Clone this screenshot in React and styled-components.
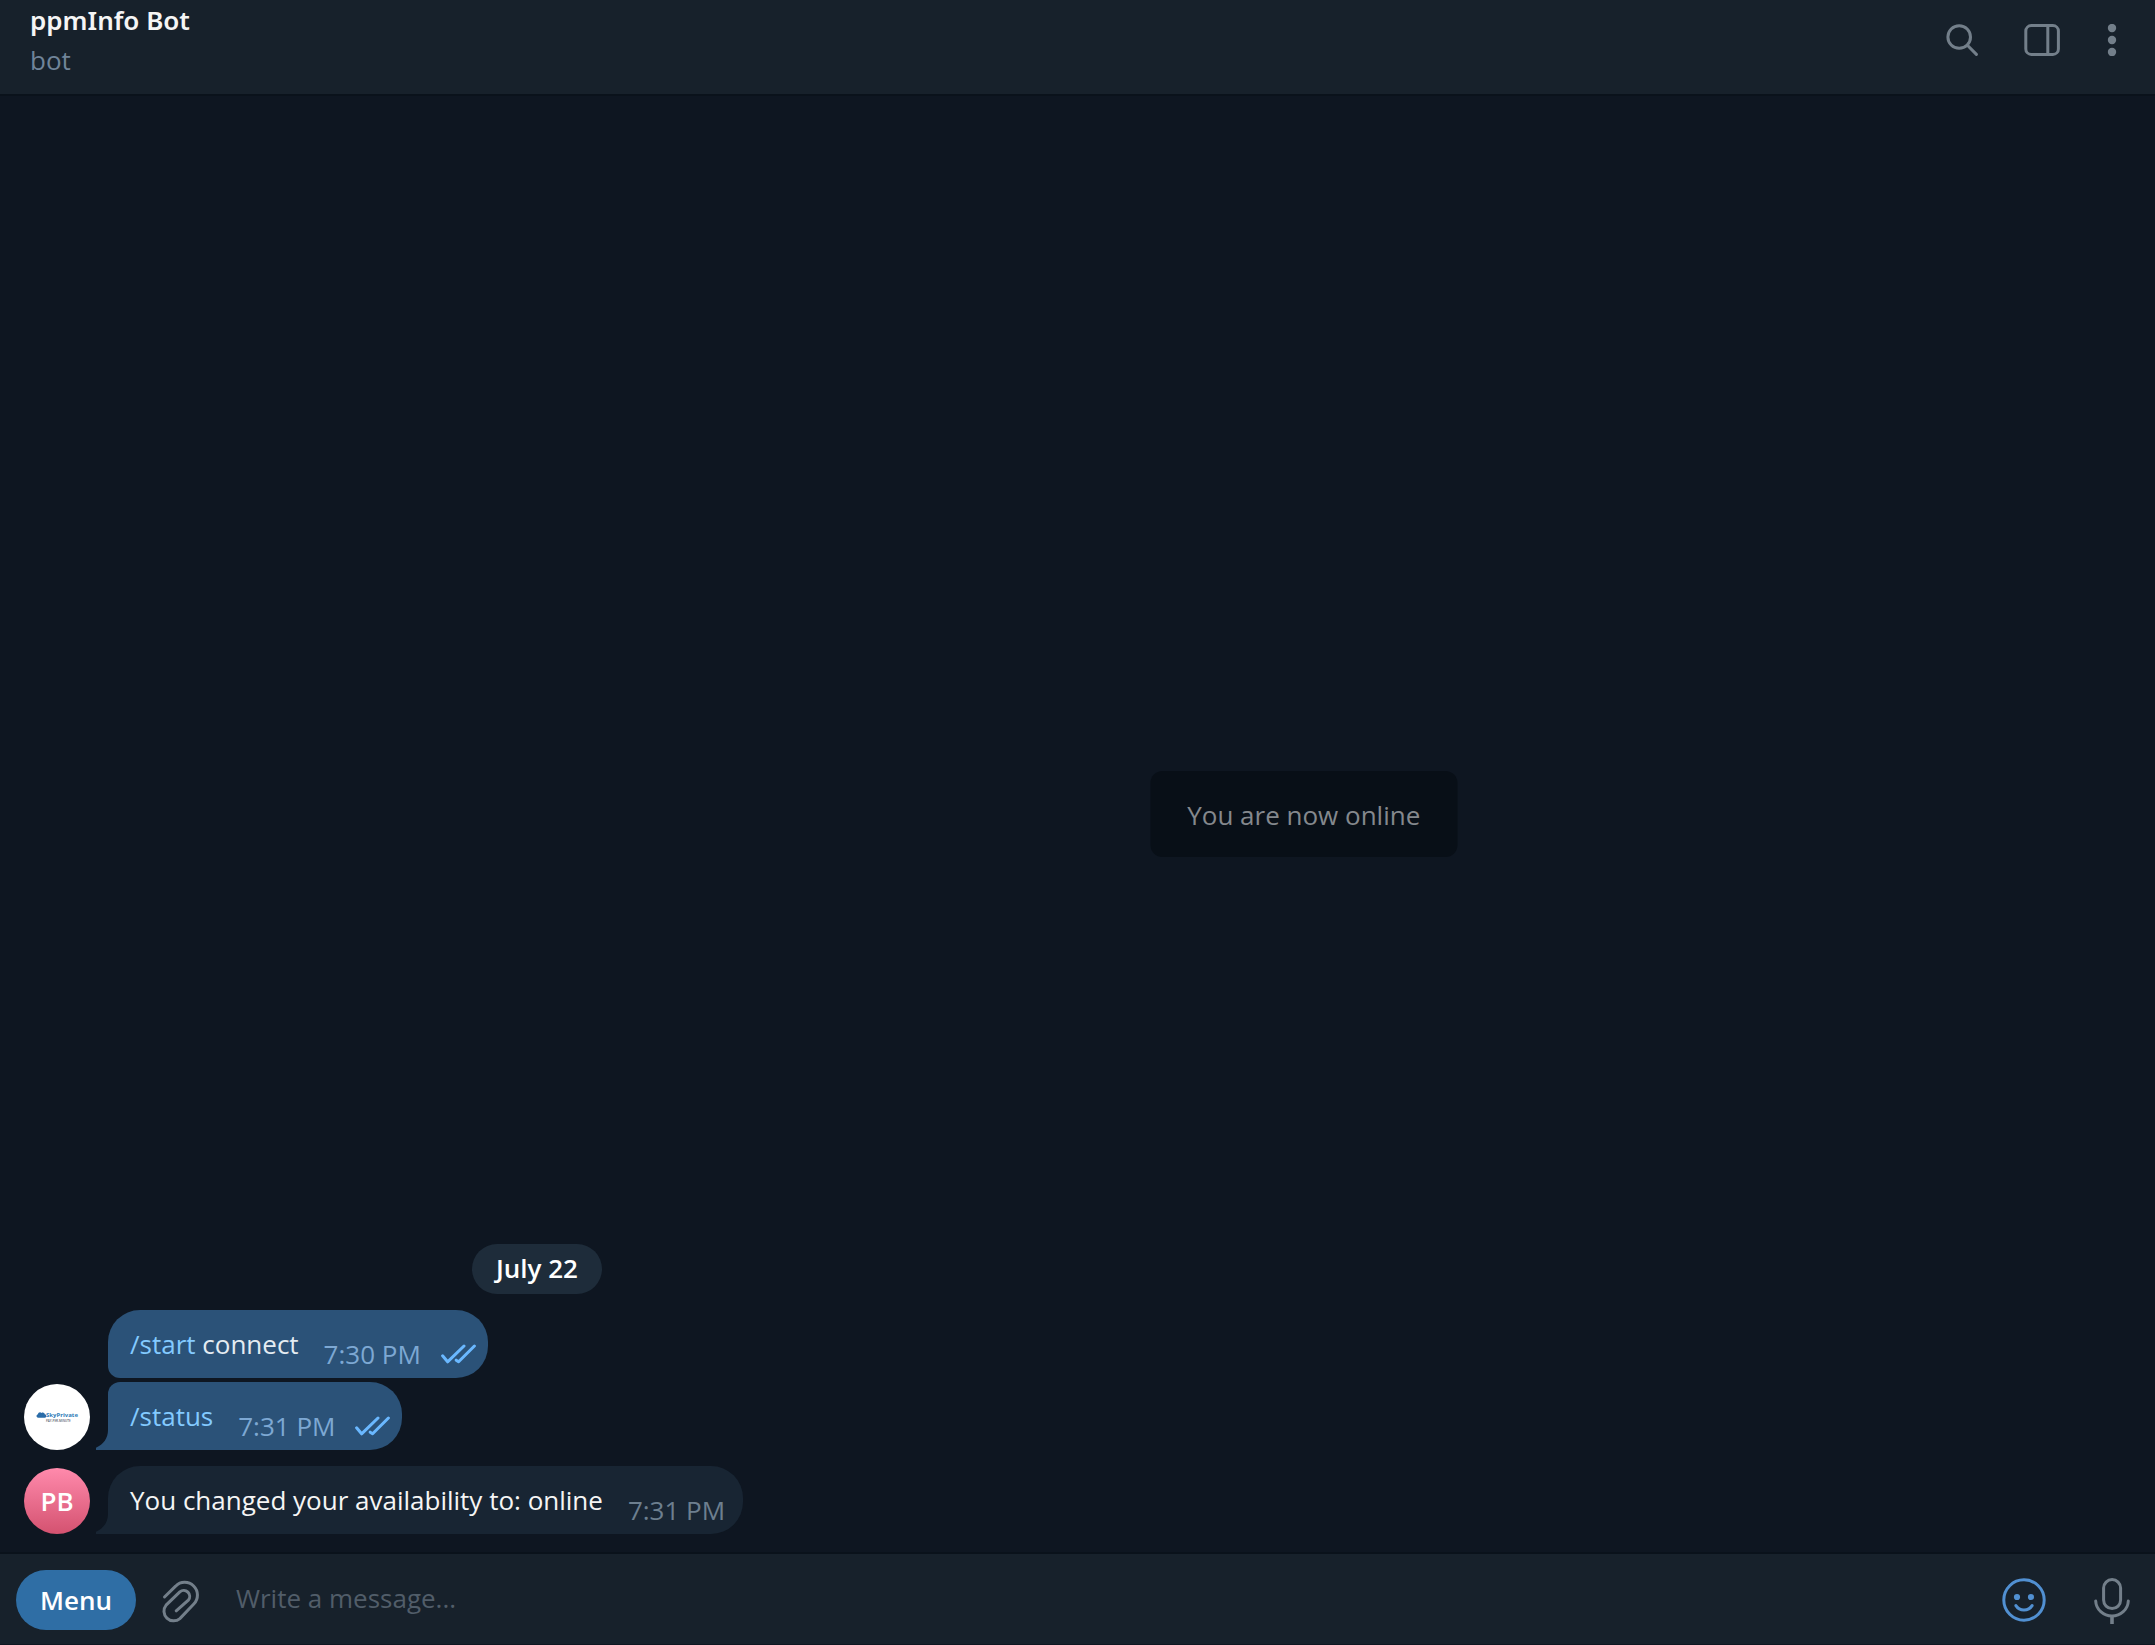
import React, { useState } from "react";
import styled, { createGlobalStyle } from "styled-components";

const GlobalStyle = createGlobalStyle`
  * {
    box-sizing: border-box;
  }

  body {
    margin: 0;
    background: #0e1621;
    color: #f5f5f5;
    font-family: "Open Sans", "Noto Sans", sans-serif;
    font-size: 26px;
    line-height: 36px;
  }
`;

const Window = styled.div`
  position: relative;
  min-height: 100vh;
  display: flex;
  flex-direction: column;
`;

const Header = styled.header`
  display: flex;
  justify-content: space-between;
  padding: 2px 37px 16px 30px;
  background: #17212b;
  border-bottom: 2px solid #0a121b;
`;

const Peer = styled.div`
  display: flex;
  flex-direction: column;
  gap: 4px;
`;

// Noto Sans has the serifed capital I
const PeerName = styled.h1`
  margin: 0;
  font-family: "Noto Sans", "Open Sans", sans-serif;
  font-size: 26px;
  font-weight: 600;
  line-height: 36px;
`;

const PeerStatus = styled.span`
  color: #708499;
`;

const Toolbar = styled.div`
  display: flex;
  align-items: center;
  gap: 46px;
`;

const IconButton = styled.button`
  display: flex;
  padding: 0;
  border: 0;
  background: none;
  color: ${props => (props.$active ? "#5190d2" : "#737f8a")};
  cursor: pointer;
`;

const History = styled.main`
  flex: 1;
  display: flex;
  flex-direction: column;
  justify-content: flex-end;
  padding-bottom: 18px;
`;

const Column = styled.div`
  width: 100%;
  max-width: 1074px;
  display: flex;
  flex-direction: column;
`;

const DateBadge = styled.time`
  align-self: center;
  margin-bottom: 16px;
  padding: 6px 24px 8px;
  border-radius: 25px;
  background: #1e2c3a;
  color: #fff;
  font-weight: 600;
`;

const Row = styled.div`
  display: flex;
  align-items: flex-end;
  gap: 18px;
  padding-left: 24px;
  margin-top: ${props => (props.$attached ? "4px" : "0")};
  margin-bottom: ${props => (props.$last ? "16px" : "0")};
`;

const Avatar = styled.div`
  width: 66px;
  height: 66px;
  flex: none;
  display: flex;
  align-items: center;
  justify-content: center;
  overflow: hidden;
  border-radius: 50%;
  background: ${props => props.$fill || "transparent"};
  color: #fff;
  font-weight: 600;
`;

const Bubble = styled.div`
  position: relative;
  display: flex;
  gap: 25px;
  padding: 16px ${props => (props.$out ? "12px" : "18px")} 6px 22px;
  border-radius: ${props => props.$corners};
  background: ${props => (props.$out ? "#2b5278" : "#182533")};
`;

const Tail = styled.svg`
  position: absolute;
  left: -12px;
  bottom: 0;
  fill: ${props => (props.$out ? "#2b5278" : "#182533")};
`;

const Body = styled.p`
  margin: 0 0 10px;
  color: ${props => (props.$out ? "#e4ecf2" : "#f5f5f5")};
`;

const Command = styled.a`
  color: #83caff;
  text-decoration: none;
`;

const Meta = styled.div`
  align-self: flex-end;
  display: flex;
  align-items: center;
  gap: 20px;
  color: ${props => (props.$out ? "#7da8d3" : "#6d7f8f")};
`;

const Toast = styled.div`
  position: absolute;
  left: 60.5%;
  top: 49.5%;
  transform: translate(-50%, -50%);
  padding: 26px 37px 24px;
  border-radius: 12px;
  background: #080f17;
  color: #84888d;
  white-space: nowrap;
`;

const Composer = styled.form`
  display: flex;
  align-items: center;
  padding: 16px 25px 14px 16px;
  background: #17212b;
  border-top: 2px solid #0a121b;
  border-bottom: 1px solid #0e1621;
`;

const MenuButton = styled.button`
  margin-right: 26px;
  padding: 12px 24px;
  border: 0;
  border-radius: 30px;
  background: #2f6ea5;
  color: #fff;
  font: inherit;
  font-weight: 600;
  cursor: pointer;
`;

const MessageInput = styled.input`
  flex: 1;
  min-width: 0;
  margin: 0 36px;
  padding: 0 0 4px;
  border: 0;
  outline: 0;
  background: none;
  color: #f5f5f5;
  font: inherit;

  &::placeholder {
    color: #515d69;
    opacity: 1;
  }
`;

const Actions = styled.div`
  display: flex;
  align-items: center;
  gap: 48px;
`;

const SearchIcon = () => (
  <svg width="32" height="32" fill="none" stroke="currentColor" strokeWidth="3" strokeLinecap="round">
    <circle cx="13.2" cy="13" r="11.3" />
    <path d="M21.4 21.2L30.4 30.4" />
  </svg>
);

const PanelIcon = () => (
  <svg width="36" height="32" fill="none" stroke="currentColor" strokeWidth="3">
    <rect x="1.8" y="1.6" width="32.6" height="28.8" rx="5.5" />
    <path d="M23.8 2V30" />
  </svg>
);

const DotsIcon = () => (
  <svg width="12" height="32" fill="currentColor">
    <circle cx="6" cy="4" r="4.2" />
    <circle cx="6" cy="16" r="4.2" />
    <circle cx="6" cy="28" r="4.2" />
  </svg>
);

const ClipIcon = () => (
  <svg
    width="38"
    height="48"
    viewBox="0 -4 38 48"
    fill="none"
    stroke="currentColor"
    strokeWidth="3"
    strokeLinecap="round"
  >
    <path d="M2.5 17L13.6 6.2A12.7 12.7 0 0 1 31.8 24L17.9 38.6A9.7 9.7 0 0 1 4.1 25.1L17.8 11.8A6 6 0 0 1 26.3 20.2L14.2 30.8" />
  </svg>
);

const SmileIcon = () => (
  <svg width="44" height="44" fill="none" stroke="currentColor" strokeWidth="3" strokeLinecap="round">
    <circle cx="22" cy="22" r="20.2" />
    <circle cx="15" cy="19" r="3.1" fill="currentColor" stroke="none" />
    <circle cx="29" cy="19" r="3.1" fill="currentColor" stroke="none" />
    <path d="M13.9 27.6C17.5 33.4 26.5 33.4 30.1 27.6" />
  </svg>
);

const MicIcon = () => (
  <svg width="36" height="48" fill="none" stroke="currentColor" strokeWidth="3" strokeLinecap="round">
    <rect x="9.6" y="3.6" width="17" height="29" rx="8.5" />
    <path d="M1.7 25C2 33.5 9.5 40 18 40C26.5 40 34 33.5 34.3 25" />
    <path d="M18 40V48" strokeWidth="3.6" strokeLinecap="butt" />
  </svg>
);

const ReadIcon = () => (
  <svg width="35" height="20" fill="none" stroke="#6ab8ff" strokeWidth="3" strokeLinecap="round" strokeLinejoin="round">
    <path d="M1.6 11.8L6.6 17.8L23 2" />
    <path d="M15.2 16.2L17.6 17.8L33.4 2" />
  </svg>
);

const BrandLogo = () => (
  <svg width="66" height="66" role="img" aria-label="SkyPrivate">
    <path
      d="M14.3 33.8C12 33.8 12 30.6 14 30.3C14.2 28.4 16.2 27.8 17.4 28.9C18.8 27.8 20.8 28.8 20.8 30.3C22.8 30.4 22.8 33.8 20.8 33.8Z"
      fill="#2a6ca8"
    />
    <text x="22" y="33" fill="#2f7cb8" fontSize="6" fontWeight="700">
      SkyPrivate
    </text>
    <text x="22" y="38" fill="#5a636c" fontSize="3" fontWeight="600">
      PAY-PER-MINUTE
    </text>
  </svg>
);

const BubbleTail = ({ out }) => (
  <Tail $out={out} width="12" height="20">
    <path d="M12 0C12 8 7.5 14.5 0 17.7V20H12Z" />
  </Tail>
);

const Message = ({ children, out, time, corners, tail }) => (
  <Bubble $out={out} $corners={corners}>
    {tail && <BubbleTail out={out} />}
    <Body $out={out}>{children}</Body>
    <Meta $out={out}>
      <span>{time}</span>
      {out && <ReadIcon />}
    </Meta>
  </Bubble>
);

const App = () => {
  const [text, setText] = useState("");

  return (
    <Window>
      <GlobalStyle />
      <Header>
        <Peer>
          <PeerName>ppmInfo Bot</PeerName>
          <PeerStatus>bot</PeerStatus>
        </Peer>
        <Toolbar>
          <IconButton type="button" aria-label="Search">
            <SearchIcon />
          </IconButton>
          <IconButton type="button" aria-label="Toggle side panel">
            <PanelIcon />
          </IconButton>
          <IconButton type="button" aria-label="More">
            <DotsIcon />
          </IconButton>
        </Toolbar>
      </Header>

      <History>
        <Column>
          <DateBadge>July 22</DateBadge>
          <Row>
            <Avatar />
            <Message out time="7:30 PM" corners="32px 32px 32px 12px">
              <Command href="#start">/start</Command> connect
            </Message>
          </Row>
          <Row $attached $last>
            <Avatar $fill="#fff">
              <BrandLogo />
            </Avatar>
            <Message out tail time="7:31 PM" corners="12px 32px 32px 0">
              <Command href="#status">/status</Command>
            </Message>
          </Row>
          <Row>
            <Avatar $fill="linear-gradient(#ff8aac, #d45270)">PB</Avatar>
            <Message tail time="7:31 PM" corners="32px 32px 32px 0">
              You changed your availability to: online
            </Message>
          </Row>
        </Column>
      </History>

      <Composer onSubmit={e => e.preventDefault()}>
        <MenuButton type="button">Menu</MenuButton>
        <IconButton type="button" aria-label="Attach file">
          <ClipIcon />
        </IconButton>
        <MessageInput
          type="text"
          aria-label="Message"
          placeholder="Write a message..."
          value={text}
          onChange={e => setText(e.target.value)}
        />
        <Actions>
          <IconButton type="button" aria-label="Emoji" $active>
            <SmileIcon />
          </IconButton>
          <IconButton type="button" aria-label="Record voice message">
            <MicIcon />
          </IconButton>
        </Actions>
      </Composer>

      <Toast role="status">You are now online</Toast>
    </Window>
  );
};

export default App;
